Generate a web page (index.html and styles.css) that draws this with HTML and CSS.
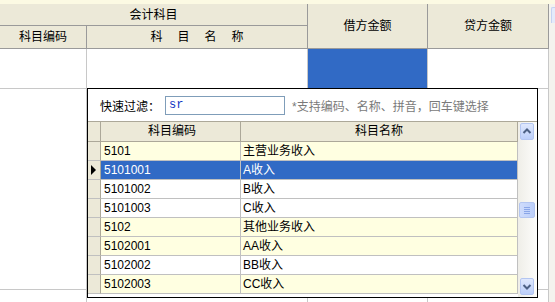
FILE: index.html
```html
<!DOCTYPE html>
<html>
  <head>
    <meta charset="utf-8" />
    <title>科目选择</title>
    <link rel="stylesheet" href="styles.css">
  </head>

  <body>
    <div class="topband"></div>

    <div class="sheet">
      <div class="hd span2">会计科目</div>
      <div class="hd tall c3">借方金额</div>
      <div class="hd tall c4">贷方金额</div>
      <div class="vscroll"><div class="vbtn"></div></div>

      <div class="hd">科目编码</div>
      <div class="hd spaced">科目名称</div>

      <div class="cell"></div>
      <div class="cell"></div>
      <div class="cell sel"></div>
      <div class="cell"></div>

      <div class="cell"></div>
      <div class="cell"></div>
      <div class="cell"></div>
      <div class="cell"></div>

      <div class="cell"></div>
      <div class="cell"></div>
      <div class="cell"></div>
      <div class="cell"></div>
    </div>

    <!-- dropdown list for the account cell -->
    <div class="popup">
      <div class="filter">
        <span class="label">快速过滤：</span>
        <div class="input">sr</div>
        <span class="hint">*支持编码、名称、拼音，回车键选择</span>
      </div>

      <div class="list">
        <div class="table">
          <div class="row head">
            <div class="ind"></div>
            <div>科目编码</div>
            <div>科目名称</div>
          </div>
          <div class="row y">
            <div class="ind"></div>
            <div>5101</div>
            <div>主营业务收入</div>
          </div>
          <div class="row on">
            <div class="ind"><span class="arrow"></span></div>
            <div>5101001</div>
            <div>A收入</div>
          </div>
          <div class="row">
            <div class="ind"></div>
            <div>5101002</div>
            <div>B收入</div>
          </div>
          <div class="row">
            <div class="ind"></div>
            <div>5101003</div>
            <div>C收入</div>
          </div>
          <div class="row y">
            <div class="ind"></div>
            <div>5102</div>
            <div>其他业务收入</div>
          </div>
          <div class="row y">
            <div class="ind"></div>
            <div>5102001</div>
            <div>AA收入</div>
          </div>
          <div class="row">
            <div class="ind"></div>
            <div>5102002</div>
            <div>BB收入</div>
          </div>
          <div class="row y">
            <div class="ind"></div>
            <div>5102003</div>
            <div>CC收入</div>
          </div>
        </div>

        <div class="sbar">
          <div class="btn">
            <svg width="14" height="17" viewBox="0 0 14 17"><path d="M3.5 10 L7 6.5 L10.5 10" fill="none" stroke="#4d6185" stroke-width="2" /></svg>
          </div>
          <div class="thumb">
            <svg width="16" height="16" viewBox="0 0 16 16">
              <line x1="5" y1="5.5" x2="11" y2="5.5" stroke="#8aa6e8" />
              <line x1="5" y1="7.5" x2="11" y2="7.5" stroke="#8aa6e8" />
              <line x1="5" y1="9.5" x2="11" y2="9.5" stroke="#8aa6e8" />
              <line x1="5" y1="11.5" x2="11" y2="11.5" stroke="#8aa6e8" />
            </svg>
          </div>
          <div class="btn down">
            <svg width="14" height="17" viewBox="0 0 14 17"><path d="M3.5 7 L7 10.5 L10.5 7" fill="none" stroke="#4d6185" stroke-width="2" /></svg>
          </div>
        </div>
      </div>
    </div>
  </body>
</html>
```

FILE: styles.css
```css
* {
  margin: 0;
  padding: 0;
  box-sizing: border-box;
}

body {
  font-family: "Liberation Sans", "Noto Sans CJK SC", sans-serif;
  font-size: 12px;
  color: #000;
  background-color: #fff;
  width: 555px;
  height: 302px;
  overflow: hidden;
  position: relative;
}

.topband {
  height: 4px;
  background-color: #fcfae3;
}

/* the voucher grid behind the popup */
.sheet {
  display: grid;
  grid-template-columns: 87px 221px 120px 121px 6px;
  grid-template-rows: 22px 23px 40px 201px 20px;
}

.hd {
  background-color: #ece9d8;
  border-right: 1px solid #9a9a9a;
  border-bottom: 1px solid #9a9a9a;
  display: flex;
  align-items: center;
  justify-content: center;
  line-height: 14px;
}

.span2 {
  grid-column: 1 / 3;
  grid-row: 1;
}

.tall {
  grid-row: 1 / 3;
}

.c3 {
  grid-column: 3;
}

.c4 {
  grid-column: 4;
}

.spaced {
  letter-spacing: 15px;
  padding-left: 15px;
}

.cell {
  border-right: 1px solid #c8c8c8;
  border-bottom: 1px solid #c8c8c8;
}

.cell.sel {
  background-color: #316ac5;
}

.vscroll {
  grid-column: 5;
  grid-row: 1 / -1;
  background-color: #f4f3ee;
}

.vbtn {
  margin: 3px 0 0 2px;
  height: 16px;
  border-top: 1px solid #c5d3f2;
  border-left: 1px solid #c5d3f2;
  border-top-left-radius: 2px;
  background-color: #e4ebfb;
}

/* popup */
.popup {
  position: absolute;
  left: 87px;
  top: 88px;
  width: 451px;
  height: 210px;
  border: 1px solid #000;
  background-color: #fff;
  display: flex;
  flex-direction: column;
}

.filter {
  height: 32px;
  display: flex;
  align-items: center;
  padding-left: 12px;
}

.label {
  margin-right: 5px;
}

.input {
  width: 120px;
  height: 19px;
  border: 1px solid #7f9db9;
  padding-left: 3px;
  font-family: "Liberation Mono", monospace;
  font-size: 12px;
  line-height: 17px;
  color: #1436c4;
}

.hint {
  margin-left: 7px;
  color: #7a7a7a;
}

.list {
  flex: 1;
  display: flex;
  border-top: 1px solid #aca899;
}

.table {
  width: 430px;
}

.row {
  display: grid;
  grid-template-columns: 13px 140px 277px;
  height: 19px;
}

.row > div {
  border-right: 1px solid #c0c0c0;
  border-bottom: 1px solid #c0c0c0;
  line-height: 18px;
  padding-left: 3px;
  white-space: nowrap;
  overflow: hidden;
}

.row > div + div + div {
  padding-left: 2px;
}

.row > .ind {
  background-color: #ece9d8;
  border-right-color: #aca899;
  padding-left: 3px;
  display: flex;
  align-items: center;
}

.head {
  height: 20px;
}

.head > div {
  background-color: #ece9d8;
  border-right-color: #aca899;
  border-bottom-color: #aca899;
  text-align: center;
  line-height: 19px;
}

.head > div + div + div {
  padding-left: 0;
}

.y > div {
  background-color: #ffffe1;
}

.on > div {
  background-color: #316ac5;
  color: #fff;
}

.arrow {
  width: 0;
  height: 0;
  border-left: 5px solid #000;
  border-top: 5px solid transparent;
  border-bottom: 5px solid transparent;
}

/* list scrollbar */
.sbar {
  width: 19px;
  display: flex;
  flex-direction: column;
  background: linear-gradient(to right, #efeee8, #fdfdfb);
}

.btn {
  width: 14px;
  height: 17px;
  margin: 1px 0 0 2px;
  border: 1px solid #b4c6f1;
  border-radius: 2px;
  background: linear-gradient(#dfe8fd, #bccffa);
  display: flex;
}

.btn.down {
  margin-top: auto;
  margin-bottom: 2px;
}

.thumb {
  width: 16px;
  height: 16px;
  margin: 62px 0 0 1px;
  border: 1px solid #b4c6f1;
  border-radius: 2px;
  background: linear-gradient(to right, #cfdcfc, #bccffa);
  display: flex;
}

.btn svg,
.thumb svg {
  margin: -1px;
}
```
